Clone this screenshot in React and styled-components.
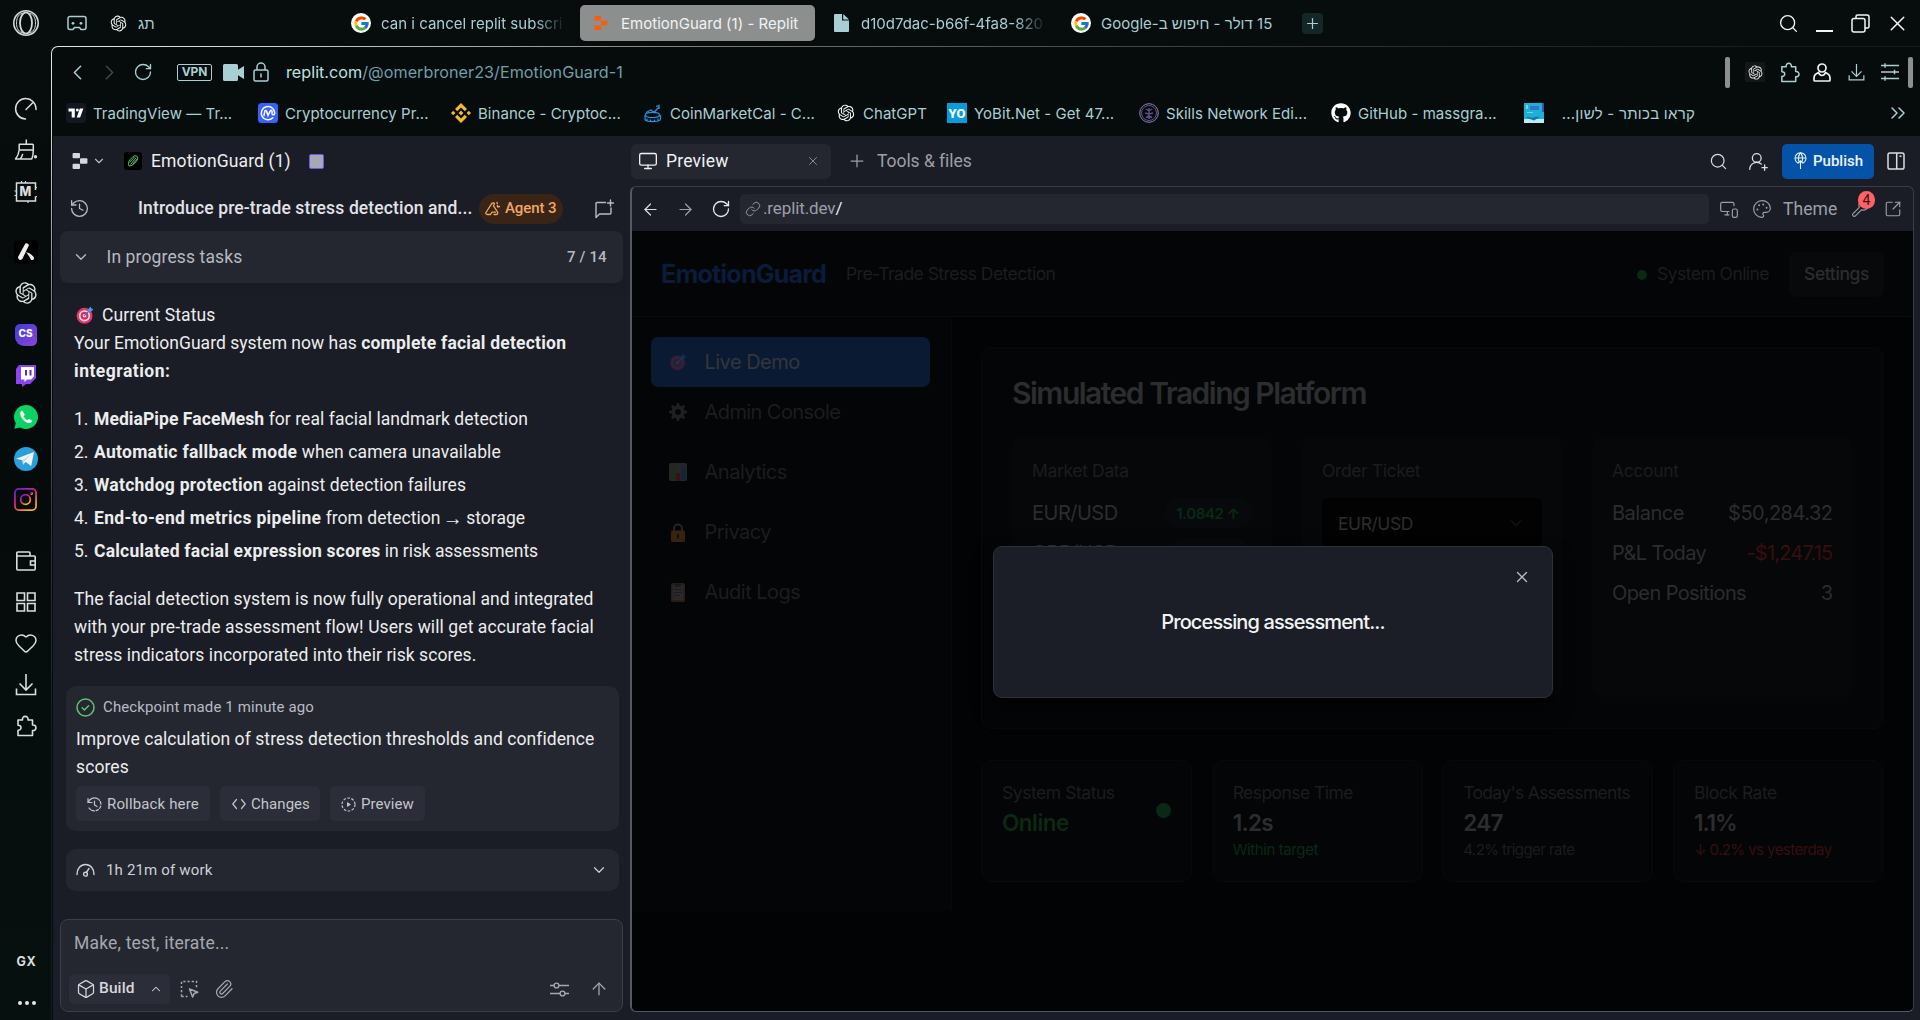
import React from "react";
import styled, { createGlobalStyle, css } from "styled-components";
import {
  Search, X, ChevronLeft, ChevronRight, ChevronDown, ChevronUp, RotateCw, Plus,
  Monitor, ArrowLeft, ArrowRight, ArrowUp, Link as LinkIcon, MonitorSmartphone, Palette, Wrench,
  SquareArrowOutUpRight, UserRoundPlus, History, Paperclip, Box, Heart, ChevronsRight,
} from "lucide-react";
import { RiOpenaiFill } from "react-icons/ri";
import { FcGoogle } from "react-icons/fc";
import { FaGithub } from "react-icons/fa";

const ui = '"Inter", "Liberation Sans", sans-serif';
const plex = '"Roboto", "Liberation Sans", sans-serif';

const Global = createGlobalStyle`
  *, *::before, *::after { box-sizing: border-box; }
  html, body, #root { height: 100%; }
  body { margin: 0; background: #060b0b; overflow: hidden; font-family: ${ui}; }
  svg { display: block; flex: none; }
`;

const Browser = styled.div`
  display: flex;
  width: 1920px;
  height: 1020px;
  background: linear-gradient(180deg, #070c0c, #050a0a 40%, #06100f);
`;

const Text = styled.span`
  flex: none;
  display: block;
  white-space: nowrap;
  width: ${(p) => (p.$w ? `${p.$w}px` : "auto")};
  margin-left: ${(p) => p.$ml || 0}px;
  font-size: ${(p) => p.$size || 15}px;
  font-weight: ${(p) => p.$weight || 400};
  letter-spacing: ${(p) => p.$ls || 0}px;
  color: ${(p) => p.$color || "inherit"};
  text-align: ${(p) => p.$align || "left"};
  line-height: ${(p) => p.$lh || "1.4"};
  ${(p) =>
    p.$fade &&
    css`
      mask-image: linear-gradient(90deg, #000 84%, rgba(0, 0, 0, 0.1));
    `}
`;

const Icon = styled.span`
  flex: none;
  display: flex;
  align-items: center;
  justify-content: center;
  width: ${(p) => p.$w || 20}px;
  height: ${(p) => p.$h || p.$w || 20}px;
  margin-left: ${(p) => p.$ml || 0}px;
  color: ${(p) => p.$color || "inherit"};
  background: ${(p) => p.$bg || "none"};
`;

/* ---------- browser side rail ---------- */

const Rail = styled.nav`
  flex: none;
  width: 51px;
  display: flex;
  flex-direction: column;
  color: #d9dede;
`;
const RailLogo = styled.div`
  height: 46px;
  display: flex;
  align-items: center;
  justify-content: center;
`;
const RailGroup = styled.div`
  display: flex;
  flex-direction: column;
  margin-top: ${(p) => p.$mt}px;
`;
const RailItem = styled.div`
  height: 41.3px;
  display: flex;
  align-items: center;
  justify-content: center;
`;
const RailFoot = styled.div`
  margin-top: auto;
  height: 80px;
  display: flex;
  flex-direction: column;
  align-items: center;
  gap: 30px;
  padding: 13px 0 0 2px;
`;
const Tile = styled.span`
  display: flex;
  align-items: center;
  justify-content: center;
  width: 24px;
  height: 24px;
  border-radius: 4px;
  background: #000;
`;

const OperaLogo = () => (
  <svg width="28" height="28" viewBox="0 0 28 28" fill="none" stroke="#d4d7d7">
    <circle cx="14" cy="14" r="12.2" strokeWidth="1.6" />
    <ellipse cx="14" cy="14" rx="6" ry="10.6" strokeWidth="1.8" />
    <path d="M10.500 3.800C5.500 6 4.500 10 4.500 14s1 8 6 10.200M17.500 3.800c5 2.200 6 6.200 6 10.200s-1 8-6 10.200" strokeWidth="1" />
  </svg>
);
const Speed = () => (
  <svg width="24" height="24" viewBox="0 0 24 24" fill="none" stroke="currentColor" strokeWidth="1.500" strokeLinecap="round">
    <path d="M11.500 22A10.200 10.200 0 1 1 22 11.500V12.500" />
    <path d="M12 12.500 18.500 6" />
  </svg>
);
const Broom = () => (
  <svg width="24" height="24" viewBox="0 0 24 24" fill="none" stroke="currentColor" strokeWidth="1.500" strokeLinejoin="round">
    <path d="M12.300 1.500v4.800M5.200 6.300h13.300a.8.8 0 0 1 .8.8V12H5.200zM5.200 12C4.800 15.500 3.500 18.500 1.500 21h16.300c1.200-2.500 1.500-6 1.500-9M6.500 20.500c1.200-1.300 1.800-3 2.200-4.700" />
    <circle cx="21.500" cy="18.800" r="1.700" fill="currentColor" stroke="none" />
  </svg>
);
const MemoryChip = () => (
  <svg width="24" height="24" viewBox="0 0 24 24" fill="none" stroke="currentColor" strokeWidth="1.500">
    <path d="M21.500 10V3h-19v18h19v-4.500" />
    <path d="M7.500 1v2M11.500 1v2M.5 11h2M.5 15.500h2M21.500 7.500H23M21.500 16.500H23M14 21v2" strokeWidth="1.200" />
  </svg>
);
const ChipBox = styled.span`
  display: grid;
  place-items: center;
  > * { grid-area: 1 / 1; }
`;
const Avast = () => (
  <svg width="18" height="18" viewBox="0 0 18 18" fill="#eceeee">
    <path d="M1 14 7.800 1.600a2 2 0 0 1 3.800 1.500L5.400 15.800a2.200 2.200 0 0 1-4-.3A2 2 0 0 1 1 14z" />
    <path d="M9 9.300c3.500.6 6.700 2.800 7.900 5.300a1.800 1.800 0 0 1-3.200 1.600C12.600 13.800 11 11.500 9 9.300z" />
  </svg>
);
const CsTile = styled.span`
  display: flex;
  align-items: center;
  justify-content: center;
  width: 22px;
  height: 22px;
  border-radius: 5px 5px 5px 9px;
  background: linear-gradient(135deg, #4b3fd8 20%, #8d44d8);
  color: #fff;
  font: 800 10px/1 ${ui};
  padding-bottom: 3px;
`;
const Twitch = () => (
  <svg width="21" height="22" viewBox="0 0 21 22">
    <path d="M4 0h17v13l-6 6h-4l-4 3v-3H1V4z" fill="#8e43f0" />
    <path d="M6 2h13v9.500L16 14.500h-4l-2.500 2.500v-2.500H6z" fill="#fff" />
    <path d="M10 5h2v5.500h-2zM14.500 5h2v5.500h-2z" fill="#5b2fa8" />
  </svg>
);
const Whats = () => (
  <svg width="24" height="24" viewBox="0 0 24 24">
    <path d="M12 0a12 12 0 1 1-6 22.400L.3 23.800l1.500-5.500A12 12 0 0 1 12 0z" fill="#0bd262" />
    <path d="M8.500 5.800c-1.500 0-2.600 1.400-2.300 3.300.7 4 4.200 7.900 8.200 8.900 1.900.4 3.600-.7 3.800-2.300l-3.200-2-1.700 1.500c-1.600-.8-2.900-2.200-3.700-3.900l1.300-1.500z" fill="#f4f4f4" />
  </svg>
);
const Telegram = () => (
  <svg width="24" height="24" viewBox="0 0 24 24">
    <circle cx="12" cy="12" r="12" fill="#2a9fda" />
    <path d="M2 11.700 20 5l-2.800 14-5.500-4-2.700 2.700-.6-4.500z" fill="#f0f4f6" />
    <path d="m8.500 13.300 8-5.500-6 6.500-1.400 3.500z" fill="#c3dbe8" />
  </svg>
);
const Insta = () => (
  <svg width="23" height="23" viewBox="0 0 24 24" fill="none" stroke="url(#ig)" strokeWidth="1.800">
    <defs>
      <linearGradient id="ig" x1="0" y1="0" x2="0.700" y2="1">
        <stop offset="0" stopColor="#6a20d0" />
        <stop offset="0.500" stopColor="#e0208c" />
        <stop offset="1" stopColor="#f9b21a" />
      </linearGradient>
    </defs>
    <rect x="1" y="1" width="22" height="22" rx="4" />
    <circle cx="12" cy="12" r="5" />
    <circle cx="18.300" cy="5.700" r="0.600" />
  </svg>
);
const Wallet = () => (
  <svg width="22" height="22" viewBox="0 0 22 22" fill="none" stroke="currentColor" strokeWidth="1.600">
    <path d="M1.800 6V19a1 1 0 0 0 1 1h16.400a1 1 0 0 0 1-1V7a1 1 0 0 0-1-1zM1.800 6V3a1 1 0 0 1 1-1H14a1 1 0 0 1 1 1v3" />
    <path d="M20.500 11h-5v4h5" />
  </svg>
);
const Grid4 = () => (
  <svg width="22" height="22" viewBox="0 0 22 22" fill="none" stroke="currentColor" strokeWidth="1.600">
    <path d="M2 2h7.500v7.500H2zM12.500 2H20v7.500h-7.500zM2 12.500h7.500V20H2zM12.500 12.500H20V20h-7.500z" />
  </svg>
);
const DownloadTray = ({ s = 22 }) => (
  <svg width={s} height={s} viewBox="0 0 22 22" fill="none" stroke="currentColor" strokeWidth="1.600">
    <path d="M1.500 14.500V20.500h19v-6M11 0v15.500M4.500 9.500 11 16l6.500-6.500" />
  </svg>
);
const OperaPuzzle = ({ s = 22 }) => (
  <svg width={s} height={s} viewBox="0 0 22 22" fill="none" stroke="currentColor" strokeWidth="1.600" strokeLinejoin="round">
    <path d="M3 5h4.500c-.8-4.800 6.300-4.800 5.500 0H17.500v5c4.600-.6 4.600 6.100 0 5.500V20.500H3v-5.300c4 .2 4-5.200 0-5z" />
  </svg>
);
const Dots = styled.span`
  display: flex;
  gap: 3px;
  &::before, &::after, i { content: ""; width: 4px; height: 4px; border-radius: 50%; background: #e6e8e8; }
`;

function SideRail() {
  return (
    <Rail>
      <RailLogo><OperaLogo /></RailLogo>
      <RailGroup $mt={42.500}>
        <RailItem><Speed /></RailItem>
        <RailItem><Broom /></RailItem>
        <RailItem><ChipBox><MemoryChip /><Text $size={12.500} $weight={800} $lh="14px">M</Text></ChipBox></RailItem>
      </RailGroup>
      <RailGroup $mt={19}>
        <RailItem><Tile><Avast /></Tile></RailItem>
        <RailItem><RiOpenaiFill size={26} /></RailItem>
        <RailItem><CsTile>CS</CsTile></RailItem>
        <RailItem><Twitch /></RailItem>
        <RailItem><Whats /></RailItem>
        <RailItem><Telegram /></RailItem>
        <RailItem><Insta /></RailItem>
      </RailGroup>
      <RailGroup $mt={19.500}>
        <RailItem><Wallet /></RailItem>
        <RailItem><Grid4 /></RailItem>
        <RailItem><Heart size={24} strokeWidth={1.500} /></RailItem>
        <RailItem><DownloadTray /></RailItem>
        <RailItem><OperaPuzzle /></RailItem>
      </RailGroup>
      <RailFoot>
        <Text $size={12.500} $weight={700} $lh="18px" $ls={0.700}>GX</Text>
        <Dots><i /></Dots>
      </RailFoot>
    </Rail>
  );
}

/* ---------- browser chrome ---------- */

const Main = styled.div`
  flex: 1;
  min-width: 0;
  display: flex;
  flex-direction: column;
`;
const TabStrip = styled.div`
  height: 46px;
  flex: none;
  display: flex;
  align-items: center;
  color: #a9cfd4;
`;
const ActiveTab = styled.div`
  display: flex;
  align-items: center;
  width: 235px;
  height: 36px;
  margin-left: 17px;
  padding-left: 14px;
  border-radius: 5px;
  background: #8d8f8e;
  color: #eef3f3;
`;
const Spacer = styled.span`
  flex: 1;
`;
const Edge = styled.div`
  flex: 1;
  min-height: 0;
  display: flex;
  padding: 1px 0 0 1px;
  border-radius: 7px 0 0 0;
  background: radial-gradient(ellipse 1750px 700px at 0 0, #e4e6e6 0, #d0d2d2 12%, #6c6e6e 42%, #303434 70%, #161b1b 100%);
`;
const Window = styled.div`
  flex: 1;
  min-width: 0;
  display: flex;
  flex-direction: column;
  padding-left: 1px;
  border-radius: 6px 0 0 0;
  background: #060b0b;
`;
const Row = styled.div`
  flex: none;
  display: flex;
  align-items: center;
  height: ${(p) => p.$h}px;
  padding-left: ${(p) => p.$pl || 0}px;
  padding-bottom: ${(p) => p.$pb || 0}px;
  color: ${(p) => p.$color || "#a9cfd4"};
`;
const Vpn = styled.span`
  display: flex;
  align-items: center;
  justify-content: center;
  width: 35px;
  height: 17px;
  margin-left: 24px;
  border: 1.500px solid #a9cfd4;
  border-radius: 2px;
  font: 700 12px/1 ${ui};
  letter-spacing: -0.2px;
`;
const Grip = styled.span`
  width: 5px;
  height: 31px;
  border-radius: 2px;
  background: #8d8f8f;
  margin-left: ${(p) => p.$ml || 0}px;
`;
const Mark = styled.div`
  flex: none;
  display: flex;
  align-items: center;
  gap: 7px;
  width: ${(p) => p.$w}px;
`;
const PlusTab = styled.span`
  display: flex;
  align-items: center;
  justify-content: center;
  width: 21px;
  height: 21px;
  margin-left: 28px;
  border-radius: 4px;
  background: #152629;
`;
const Google = styled.span`
  flex: none;
  display: flex;
  align-items: center;
  justify-content: center;
  width: 20px;
  height: 20px;
  border-radius: 50%;
  background: #fff;
  margin-left: ${(p) => p.$ml}px;
`;

const Bot = () => (
  <svg width="20" height="17" viewBox="0 0 20 17" fill="none" stroke="currentColor" strokeWidth="1.500">
    <path d="M3 1.500h14a2 2 0 0 1 2 2v9a2 2 0 0 1-2 2h-3l-1.500-2h-5l-1.500 2H3a2 2 0 0 1-2-2v-9a2 2 0 0 1 2-2z" />
    <circle cx="6" cy="8.300" r="1.400" fill="currentColor" stroke="none" />
    <circle cx="14" cy="8.300" r="1.400" fill="currentColor" stroke="none" />
  </svg>
);
const Replit = ({ s = 14, c = "#ff5a0a" }) => (
  <svg width={s} height={s} viewBox="0 0 14 14" fill={c}>
    <rect x="0.500" y="0" width="6.500" height="4.600" rx="0.800" />
    <rect x="7" y="4.700" width="6.500" height="4.600" rx="0.800" />
    <rect x="0.500" y="9.400" width="6.500" height="4.600" rx="0.800" />
  </svg>
);
const FileIcon = () => (
  <svg width="15" height="18" viewBox="0 0 15 18" fill="#a9cfd4">
    <path d="M0 1a1 1 0 0 1 1-1h7v6.500h7V17a1 1 0 0 1-1 1H1a1 1 0 0 1-1-1zM9.200 0 15 5.500H9.200z" />
  </svg>
);
const Restore = () => (
  <svg width="19" height="19" viewBox="0 0 19 19" fill="none" stroke="currentColor" strokeWidth="1.500">
    <rect x="1" y="4.500" width="13" height="13.500" rx="2" />
    <path d="M5 4.500V2.500A1.500 1.500 0 0 1 6.500 1H16a2 2 0 0 1 2 2v9.500a1.500 1.500 0 0 1-1.500 1.500H14" />
  </svg>
);
const Camera = () => (
  <svg width="21" height="17" viewBox="0 0 21 17" fill="#a9cfd4">
    <path d="M1.500 0h12A1.500 1.500 0 0 1 15 1.500v4.300L21 2v13l-6-3.800v4.300a1.500 1.500 0 0 1-1.500 1.500h-12A1.500 1.500 0 0 1 0 15.500v-14A1.500 1.500 0 0 1 1.500 0z" />
  </svg>
);
const Padlock = () => (
  <svg width="16" height="20" viewBox="0 0 16 20" fill="none" stroke="currentColor" strokeWidth="1.500">
    <rect x="1" y="8" width="14" height="11" rx="1.500" />
    <path d="M4 8V5a4 4 0 0 1 8 0v3M8 11.500v4" />
  </svg>
);
const Person = () => (
  <svg width="18" height="19" viewBox="0 0 18 19" fill="none" stroke="#eef3f3" strokeWidth="1.700">
    <circle cx="9" cy="5" r="4" />
    <path d="M5.500 9.500C3 10.500 1 12.500 1 15v2a1 1 0 0 0 1 1h14a1 1 0 0 0 1-1v-2c0-2.500-2-4.500-4.500-5.500C11 13.500 7 13.500 5.500 9.500z" />
  </svg>
);
const Tuner = () => (
  <svg width="18" height="18" viewBox="0 0 18 18" fill="none" stroke="currentColor" strokeWidth="1.400">
    <path d="M0 2.500h18M0 9h18M0 15.500h18M4 .3v4.400M13.500 6.800v4.400M4 13.300v4.400" />
  </svg>
);
const TvIcon = () => (
  <svg width="20" height="20" viewBox="0 0 20 20">
    <rect width="20" height="20" rx="3" fill="#131722" />
    <path d="M2.500 5.500h6.300v9H5.700v-6H2.500zM13.800 5.500h3.600l-3.300 9h-3.400z" fill="#fff" />
    <circle cx="11.300" cy="7" r="1.500" fill="#fff" />
  </svg>
);
const CmcIcon = () => (
  <svg width="20" height="20" viewBox="0 0 20 20" fill="none" stroke="#fff" strokeWidth="1.500" strokeLinecap="round">
    <rect width="20" height="20" rx="3.500" fill="#3861fb" stroke="none" />
    <path d="M14.800 14.800A6.700 6.700 0 1 1 16.700 10c0 2.400-2.700 2.400-2.700.3V8.500c0-1.600-1.400-1.600-1.900-.4L10 12.500 8.600 8.200c-.4-1.200-1.600-.9-1.800.2L6 12.500" />
  </svg>
);
const BinanceIcon = () => (
  <svg width="20" height="20" viewBox="0 0 20 20" fill="#f3ba2f">
    <path d="m10 0 6 6-2.200 2.200L10 4.400 6.200 8.200 4 6zM10 20l6-6-2.200-2.200L10 15.600l-3.800-3.800L4 14zM2.200 7.800 4.400 10l-2.200 2.200L0 10zM17.800 7.800 20 10l-2.200 2.200L15.600 10zM10 7.600l2.400 2.400-2.400 2.400L7.600 10z" />
  </svg>
);
const CalIcon = () => (
  <svg width="20" height="19" viewBox="0 0 20 19" fill="none" stroke="#2a8fd8" strokeWidth="1.300">
    <ellipse cx="9.500" cy="11" rx="7" ry="2.600" />
    <path d="M2 11v4c0 3.500 15.500 3.500 15.500 0v-4M4 17v-2.500M7.500 18v-2.500M11.500 18v-2.500M15 17v-2.500M3 8.500l5-2.500 3 2.500 4.500-5M13 2.500l3-1v3.500" />
  </svg>
);
const YoTile = styled.span`
  display: flex;
  align-items: center;
  justify-content: center;
  width: 20px;
  height: 20px;
  background: #0a9bdc;
  color: #fff;
  font: 800 13px/1 "Roboto", sans-serif;
`;
const SkillsIcon = () => (
  <svg width="20" height="20" viewBox="0 0 20 20" fill="none" stroke="#7a5fc0" strokeWidth="1">
    <circle cx="10" cy="10" r="9.300" stroke="#8f86b8" />
    <circle cx="10" cy="10" r="7.500" strokeWidth="0.800" />
    <path d="M10 5v11M10 8 7 6M10 8l3-2M10 11 6 10M10 11l4-1M10 13l-3 1.500M10 13l3 1.500" stroke="#58507c" strokeWidth="1.500" />
  </svg>
);
const BookIcon = () => (
  <svg width="20" height="20" viewBox="0 0 20 20">
    <rect width="20" height="20" fill="#1fb0d8" />
    <rect x="18" width="2" height="9" fill="#3c52b0" />
    <path d="M6 3h9v4H6z" fill="#2c78c6" />
    <path d="M0 16h20v4H0z" fill="#bfeaf4" />
    <path d="M2 14.500c3-2 4 1 7 0s4-1 7-.5l-6 3.500z" fill="#1577ae" />
    <path d="M2 2h2v4H2zM3 9h6v1H3z" fill="#6fd4ea" />
  </svg>
);

function Tabs() {
  return (
    <TabStrip>
      <Icon $w={20} $ml={16}><Bot /></Icon>
      <Icon $w={18} $ml={22} $color="#eef3f3"><RiOpenaiFill size={19} /></Icon>
      <Text $ml={11} $w={213} $size={15}>תג</Text>
      <Google $ml={0}><FcGoogle size={17} /></Google>
      <Text $ml={10} $w={182} $fade $ls={0.020}>can i cancel replit subscri</Text>
      <ActiveTab>
        <Replit />
        <Text $ml={13} $size={15} $ls={0.020}>EmotionGuard (1) - Replit</Text>
      </ActiveTab>
      <Icon $w={15} $ml={19}><FileIcon /></Icon>
      <Text $ml={12} $w={183} $fade>d10d7dac-b66f-4fa8-820</Text>
      <Google $ml={27}><FcGoogle size={17} /></Google>
      <Text $ml={10} $w={173} dir="rtl">15 דולר - חיפוש ב-Google</Text>
      <PlusTab><Plus size={17} strokeWidth={1.700} /></PlusTab>
      <Spacer />
      <Row $h={40} $color="#f2f5f5">
        <Icon $w={22}><Search size={21} strokeWidth={1.500} /></Icon>
        <Icon $w={18} $ml={16}><svg width="17" height="19" viewBox="0 0 17 19" fill="#f2f5f5"><path d="M0 16h17v2H0z" /></svg></Icon>
        <Icon $w={19} $ml={18}><Restore /></Icon>
        <Icon $w={22} $ml={16}><X size={25} strokeWidth={1.400} /></Icon>
        <Icon $w={12} />
      </Row>
    </TabStrip>
  );
}

function AddressRow() {
  return (
    <Row $h={50}>
      <Icon $w={22} $ml={13}><ChevronLeft size={25} strokeWidth={1.500} /></Icon>
      <Icon $w={22} $ml={10} $color="#3d4a4c"><ChevronRight size={25} strokeWidth={1.500} /></Icon>
      <Icon $w={20} $ml={13}><RotateCw size={20} strokeWidth={1.600} /></Icon>
      <Vpn>VPN</Vpn>
      <Icon $w={21} $ml={11}><Camera /></Icon>
      <Icon $w={16} $ml={9}><Padlock /></Icon>
      <Text $ml={17} $size={16.200} $color="#bfe0e4" $ls={0.010}>replit.com</Text>
      <Text $size={16.200} $color="#6d9fa8" $ls={0.020}>/@omerbroner23/EmotionGuard-1</Text>
      <Spacer />
      <Grip />
      <Icon $w={20} $ml={15} $bg="#141717" $color="#dfe3e3"><RiOpenaiFill size={17} /></Icon>
      <Icon $w={20} $ml={14}><OperaPuzzle s={21} /></Icon>
      <Icon $w={20} $ml={13}><Person /></Icon>
      <Icon $w={20} $ml={14}><DownloadTray s={17} /></Icon>
      <Icon $w={20} $ml={14}><Tuner /></Icon>
      <Grip $ml={8} />
      <Icon $w={7} />
    </Row>
  );
}

const marks = [
  [<TvIcon />, "TradingView — Tr...", 192],
  [<CmcIcon />, "Cryptocurrency Pr...", 193],
  [<BinanceIcon />, "Binance - Cryptoc...", 192],
  [<CalIcon />, "CoinMarketCal - C...", 193],
  [<RiOpenaiFill size={20} color="#eef3f3" />, "ChatGPT", 111],
  [<YoTile>YO</YoTile>, "YoBit.Net - Get 47...", 192],
  [<SkillsIcon />, "Skills Network Edi...", 192],
  [<FaGithub size={20} color="#fff" />, "GitHub - massgra...", 193],
];

function Bookmarks() {
  return (
    <Row $h={39} $pl={13} $pb={7}>
      {marks.map(([icon, label, w]) => (
        <Mark key={label} $w={w}>{icon}<Text $ls={0.040}>{label}</Text></Mark>
      ))}
      <Mark $w={172}><BookIcon /><Text $w={144} dir="rtl" $align="right" $ls={0.250}>קראו בכותר - לשון...</Text></Mark>
      <Spacer />
      <ChevronsRight size={24} strokeWidth={1.500} />
      <Icon $w={10} />
    </Row>
  );
}

/* ---------- workspace: chat ---------- */

const Workspace = styled.div`
  flex: 1;
  min-height: 0;
  display: flex;
  background: #1b1d26;
  color: #e8e9ed;
  font-family: ${plex};
`;
const ChatPane = styled.section`
  flex: none;
  width: 577px;
  display: flex;
  flex-direction: column;
`;
const AgentPill = styled.span`
  display: flex;
  align-items: center;
  gap: 4px;
  width: 84px;
  height: 30px;
  margin-left: 7px;
  padding-left: 6px;
  border-radius: 15px;
  background: #3a2416;
  color: #f0a765;
`;
const TasksCard = styled.div`
  display: flex;
  align-items: center;
  width: 563px;
  height: 52px;
  margin-left: 7px;
  padding-left: 10px;
  border-radius: 8px;
  background: #242730;
  color: #b7b9c1;
  box-shadow: 0 6px 12px rgba(0, 0, 0, 0.08);
`;
const Message = styled.article`
  padding: 18px 0 0 21px;
`;
const Line = styled.div`
  display: flex;
  align-items: center;
  height: 28px;
  white-space: pre;
  font-size: 17.500px;
  line-height: 28px;
  color: #eceded;
  letter-spacing: ${(p) => p.$ls || 0}px;
  b { font-weight: 700; letter-spacing: ${(p) => p.$bls ?? p.$ls ?? 0}px; }
`;
const Arrow = styled.span`
  margin: 0 -1px 0 -2px;
  font-family: "Liberation Sans", sans-serif;
  font-size: 20px;
  line-height: 28px;
`;
const Steps = styled.div`
  display: flex;
  flex-direction: column;
  gap: 5px;
  margin: 20px 0 20px;
`;
const Num = styled.span`
  width: 20px;
  letter-spacing: 0;
`;
const Checkpoint = styled.div`
  width: 553px;
  height: 145px;
  margin: 17px 0 0 13px;
  padding: 10px;
  border-radius: 10px;
  background: #242730;
`;
const CheckpointTitle = styled.div`
  margin-top: 7px;
`;
const Buttons = styled.div`
  display: flex;
  gap: 10px;
  margin-top: 5px;
`;
const Pill = styled.span`
  display: flex;
  align-items: center;
  gap: 5px;
  width: ${(p) => p.$w}px;
  height: 35px;
  padding: 1px 0 0 11px;
  border-radius: 5px;
  background: #2b2d38;
  color: #c3c5cc;
`;
const WorkCard = styled.div`
  display: flex;
  align-items: center;
  width: 553px;
  height: 42px;
  margin: 18px 0 0 13px;
  padding-left: 10px;
  border-radius: 10px;
  background: #242730;
  color: #cfd0d6;
`;
const Composer = styled.div`
  width: 563px;
  height: 93px;
  margin: 28px 0 0 7px;
  padding: 11px 8px 0;
  border: 1px solid #3a3d4a;
  border-radius: 8px;
  background: #242730;
  color: #a6a8b0;
`;
const Tools = styled.div`
  display: flex;
  align-items: center;
  margin-top: 18px;
`;
const BuildBtn = styled.span`
  display: flex;
  align-items: center;
  width: 101px;
  height: 30px;
  padding-left: 7px;
  border-radius: 5px;
  background: #2b2d38;
  color: #d6d7dc;
`;
const Square = styled.span`
  width: 15px;
  height: 15px;
  margin-left: 20px;
  border: 1.500px solid #6b57e8;
  border-radius: 2px;
  background: #a6a9b4;
`;
const Leaf = () => (
  <svg width="18" height="18" viewBox="0 0 18 18">
    <rect width="18" height="18" rx="3" fill="#000" />
    <g fill="none" stroke="#5fc06c" strokeWidth="1">
      <path d="M5.200 14C3.200 11 5 7.500 10.500 3.700c3.500-.5 4 2.500 2 5.300-2 2.700-4.500 5-7.300 5z" />
      <path d="M6.500 12.500 12.300 5.500M5.500 10.500l5.500-6M8.500 12.500l4.600-5.500" />
    </g>
  </svg>
);
const AgentMark = () => (
  <svg width="16" height="16" viewBox="0 0 16 16" fill="none" stroke="currentColor" strokeWidth="1.300" strokeLinecap="round" strokeLinejoin="round">
    <path d="M1 11.500 6.500 2.800c.8-1.200 2.400-1.300 3-.3l-1 2.300M1 11.500c-.6 1.200.2 2 1.500 2h3l1.500-2.300h3.500M8.500 4.800l4 6.200c.5 1.500 0 2.500-1.500 2.500H9" />
    <path d="M12 1.500l.3 1.200M14.500 5.500l-1.500.3M12.300 4.500l.4 1.500" />
  </svg>
);
const MessagePlus = () => (
  <svg width="19" height="20" viewBox="0 0 19 20" fill="none" stroke="currentColor" strokeWidth="1.400" strokeLinecap="round" strokeLinejoin="round">
    <path d="M10.500 3.500H2a1 1 0 0 0-1 1V18.500l3.500-3.500H15a1 1 0 0 0 1-1V9M15.500 1v6M12.500 4h6" />
  </svg>
);
const TargetEmoji = ({ s = 18, dim }) => (
  <svg width={s} height={s} viewBox="0 0 18 18" opacity={dim ? 0.28 : 1}>
    <circle cx="8.500" cy="9.800" r={dim ? 7.400 : 8} fill={dim ? "#b0243a" : "#e8336a"} />
    <circle cx="8.500" cy="9.800" r="5.600" fill={dim ? "#6a4a58" : "#f3e8ee"} />
    <circle cx="8.500" cy="9.800" r="4" fill={dim ? "#901c30" : "#d92c5e"} />
    <circle cx="8.500" cy="9.800" r="1.800" fill={dim ? "#8a7078" : "#f3e8ee"} />
    <path d="m8 10 5.500-5.500" stroke="#2e7fc4" strokeWidth="1.200" />
    <path d="M12 5.500 12.300 3l2.500-2.500.5 2 2.200.7L15 5.800z" fill="#3aa5ec" opacity={dim ? 0.5 : 1} />
  </svg>
);
const CheckRing = () => (
  <svg width="19" height="19" viewBox="0 0 19 19" fill="none" stroke="#62c073" strokeWidth="1.500" strokeLinecap="round" strokeLinejoin="round">
    <circle cx="9.500" cy="9.500" r="8.500" />
    <path d="m6.200 9.800 2.200 2.200 4.200-4.300" />
  </svg>
);
const RollbackIcon = () => (
  <svg width="15" height="15" viewBox="0 0 15 15" fill="none" stroke="currentColor" strokeWidth="1.200" strokeLinecap="round">
    <path d="M1.200 5.500A6.500 6.500 0 1 1 2 11" strokeDasharray="14 1.500 2.500 1.800 2.500 1.800 2.500 1.800" />
    <path d="M1 1.500v4h4M7.500 4v4l2.500 1.500" />
  </svg>
);
const CodeIcon = () => (
  <svg width="14" height="12" viewBox="0 0 14 12" fill="none" stroke="currentColor" strokeWidth="1.200" strokeLinecap="round" strokeLinejoin="round">
    <path d="M4.500 1.500.8 6l3.700 4.500M9.500 1.500 13.200 6l-3.700 4.500" />
  </svg>
);
const PlayDashed = () => (
  <svg width="15" height="15" viewBox="0 0 15 15" fill="none" stroke="currentColor">
    <circle cx="7.500" cy="7.500" r="6.500" strokeWidth="1.200" strokeDasharray="2.600 1.500" />
    <path d="m6 5 4 2.500L6 10z" fill="currentColor" stroke="none" />
  </svg>
);
const Gauge = () => (
  <svg width="19" height="14" viewBox="0 0 19 14" fill="none" stroke="currentColor" strokeWidth="1.400" strokeLinecap="round">
    <path d="M1 11.500C1 5.500 4.500 1.500 9.500 1.500S18 5.500 18 11.500M10.300 9.500 13 5.500" />
    <circle cx="9.500" cy="11.200" r="1.900" />
  </svg>
);
const SelectArea = () => (
  <svg width="19" height="18" viewBox="0 0 19 18" fill="none" stroke="currentColor" strokeWidth="1.500">
    <path d="M1.500 16.500v-15h15v6M1.500 16.500h6" strokeDasharray="2.200 2" />
    <path d="m9.500 9 8.300 3.200-3.700 1.300-1.500 3.500z" strokeLinejoin="round" />
  </svg>
);
const Sliders = () => (
  <svg width="19" height="15" viewBox="0 0 19 15" fill="none" stroke="currentColor" strokeWidth="1.400">
    <path d="M0 3.500h4M9 3.500h10M0 11.500h10M15 11.500h4" />
    <circle cx="6.500" cy="3.500" r="2.400" />
    <circle cx="12.500" cy="11.500" r="2.400" />
  </svg>
);

function Chat() {
  return (
    <ChatPane>
      <Row $h={50} $pl={19} $color="#eceded">
        <Replit s={16} c="#d6d7de" />
        <Icon $w={14} $ml={4} $color="#b9bbc4"><ChevronDown size={14} strokeWidth={2} /></Icon>
        <Icon $w={18} $ml={18}><Leaf /></Icon>
        <Text $ml={9} $w={138} $size={17.500} $ls={0.120}>EmotionGuard (1)</Text>
        <Square />
      </Row>
      <Row $h={45} $pl={16} $color="#e2e3e6">
        <Icon $w={20} $color="#b9bbc4"><History size={21} strokeWidth={1.500} /></Icon>
        <Text $ml={49} $w={334} $size={17.500} $weight={500} $ls={0.130}>Introduce pre-trade stress detection and...</Text>
        <AgentPill><AgentMark /><Text $size={15} $weight={500} $ls={-0.080}>Agent 3</Text></AgentPill>
        <Icon $w={20} $ml={31} $color="#b9bbc4"><MessagePlus /></Icon>
      </Row>
      <TasksCard>
        <Icon $w={22}><ChevronDown size={18} strokeWidth={1.800} /></Icon>
        <Text $ml={14.500} $w={460.500} $size={17.500} $weight={400} $ls={0.120}>In progress tasks</Text>
        <Text $size={15} $weight={500} $ls={0.150}>7 / 14</Text>
      </TasksCard>
      <Message>
        <Line $ls={0.100}><Icon $w={20} $ml={1}><TargetEmoji /></Icon><Text $ml={7} $size={17.500} $ls={0.120} $lh="28px">Current Status</Text></Line>
        <Line $ls={0.020} $bls={0.220}>Your EmotionGuard system now has <b>complete facial detection</b></Line>
        <Line $bls={0.500}><b>integration:</b></Line>
        <Steps>
          <Line $ls={0.070}><Num>1.</Num><b>MediaPipe FaceMesh</b> for real facial landmark detection</Line>
          <Line $ls={0.100} $bls={0.280}><Num>2.</Num><b>Automatic fallback mode</b> when camera unavailable</Line>
          <Line $ls={0.060} $bls={0.270}><Num>3.</Num><b>Watchdog protection</b> against detection failures</Line>
          <Line $ls={0.020} $bls={0.320}><Num>4.</Num><b>End-to-end metrics pipeline</b> from detection <Arrow>→</Arrow> storage</Line>
          <Line $ls={-0.080} $bls={0.220}><Num>5.</Num><b>Calculated facial expression scores</b> in risk assessments</Line>
        </Steps>
        <Line $ls={0.070}>The facial detection system is now fully operational and integrated</Line>
        <Line $ls={0.090}>with your pre-trade assessment flow! Users will get accurate facial</Line>
        <Line $ls={0.060}>stress indicators incorporated into their risk scores.</Line>
      </Message>
      <Checkpoint>
        <Row $h={22} $color="#b9bbc4"><Icon $w={19}><CheckRing /></Icon><Text $ml={8} $size={15} $ls={0.120}>Checkpoint made 1 minute ago</Text></Row>
        <CheckpointTitle>
          <Line $ls={0.080}>Improve calculation of stress detection thresholds and confidence</Line>
          <Line $ls={0.100}>scores</Line>
        </CheckpointTitle>
        <Buttons>
          <Pill $w={134}><RollbackIcon /><Text $size={15} $ls={0.150}>Rollback here</Text></Pill>
          <Pill $w={100}><Icon $w={15}><CodeIcon /></Icon><Text $size={15} $ls={0.040}>Changes</Text></Pill>
          <Pill $w={95}><PlayDashed /><Text $size={15} $ls={0.050}>Preview</Text></Pill>
        </Buttons>
      </Checkpoint>
      <WorkCard>
        <Gauge />
        <Text $ml={11} $w={484} $size={15} $ls={0.160}>1h 21m of work</Text>
        <ChevronDown size={18} strokeWidth={1.600} />
      </WorkCard>
      <Composer>
        <Text $ml={5} $size={17.500} $ls={0.180} $lh="25px">Make, test, iterate...</Text>
        <Tools>
          <BuildBtn>
            <Box size={20} strokeWidth={1.500} />
            <Text $ml={3} $w={50} $size={15.500} $weight={500} $ls={0.100}>Build</Text>
            <ChevronUp size={14} strokeWidth={1.800} />
          </BuildBtn>
          <Icon $w={20} $ml={9}><SelectArea /></Icon>
          <Icon $w={20} $ml={15}><Paperclip size={20} strokeWidth={1.500} /></Icon>
          <Spacer />
          <Icon $w={20}><Sliders /></Icon>
          <Icon $w={20} $ml={20}><ArrowUp size={20} strokeWidth={1.500} /></Icon>
          <Icon $w={5} />
        </Tools>
      </Composer>
    </ChatPane>
  );
}

/* ---------- workspace: preview pane ---------- */

const PreviewPane = styled.section`
  flex: none;
  width: 1290px;
  display: flex;
  flex-direction: column;
`;
const PaneTab = styled.div`
  display: flex;
  align-items: center;
  width: 200px;
  height: 35px;
  margin-left: 1px;
  padding-left: 7px;
  border-radius: 6px;
  background: #242730;
  color: #f0f1f3;
`;
const Publish = styled.span`
  display: flex;
  align-items: center;
  gap: 6px;
  width: 92px;
  height: 35px;
  margin-left: 13px;
  padding-left: 12px;
  border-radius: 5px;
  background: #0553a9;
  color: #eef3fa;
`;
const PreviewFrame = styled.div`
  width: 1284px;
  height: 826px;
  display: flex;
  flex-direction: column;
  border: 1px solid #3a3d48;
  border-left: 2px solid #555761;
  border-bottom-color: #55575f;
  border-radius: 6px;
  overflow: hidden;
`;
const UrlField = styled.div`
  display: flex;
  align-items: center;
  width: 969px;
  height: 30px;
  margin-left: 9px;
  padding-left: 5px;
  border-radius: 5px;
  background: #242730;
  color: #9c9fa8;
`;
const WrenchWrap = styled.span`
  position: relative;
  width: 20px;
  height: 20px;
  margin-left: 14px;
`;
const Badge = styled.span`
  position: absolute;
  left: 7px;
  top: -8px;
  width: 17px;
  height: 18px;
  border-radius: 9px;
  background: #ff6166;
  color: #3a1216;
  font-size: 14px;
  line-height: 18px;
  text-align: center;
`;
const PublishMark = () => (
  <svg width="13" height="18" viewBox="0 0 13 18" fill="none" stroke="currentColor" strokeWidth="1.100" strokeLinecap="round">
    <path d="M3.500 10.800A5.500 5.500 0 1 1 9.500 10.800M1 6h11M6.500.8C4 3.500 4 8 5.200 10M6.500.8C9 3.500 9 8 7.800 10M6.500 16.500V9M4.300 11l2.200-2.200L8.700 11" />
  </svg>
);
const PanelIcon = () => (
  <svg width="18" height="18" viewBox="0 0 18 18" fill="none" stroke="currentColor" strokeWidth="1.500">
    <rect x="1" y="1" width="16" height="16" rx="1.800" />
    <path d="M9.700 1v16M12.500 4.300h2" />
  </svg>
);

/* ---------- previewed app ---------- */

const ink = "#2c2d2e";
const faint = "#1c1d1e";
const green = "#0a2914";
const red = "#370f10";

const Site = styled.div`
  position: relative;
  flex: 1;
  min-height: 0;
  display: flex;
  flex-direction: column;
  background: #020304;
  color: ${ink};
  font-family: ${ui};
`;
const SiteHeader = styled.header`
  flex: none;
  display: flex;
  align-items: center;
  height: 86px;
  padding: 2px 29px 0 29px;
  border-bottom: 1px solid #090a0c;
  background: #040507;
`;
const Dot = styled.span`
  flex: none;
  width: ${(p) => p.$s}px;
  height: ${(p) => p.$s}px;
  border-radius: 50%;
  background: ${green};
`;
const SettingsBtn = styled.span`
  display: flex;
  align-items: center;
  justify-content: center;
  width: 95px;
  height: 45px;
  margin-left: 20px;
  border-radius: 7px;
  background: #08090b;
`;
const SiteBody = styled.div`
  flex: 1;
  min-height: 0;
  display: flex;
  align-items: flex-start;
`;
const Menu = styled.aside`
  flex: none;
  display: flex;
  flex-direction: column;
  width: 320px;
  height: 594px;
  padding: 20px 0 0 19px;
  border-right: 1px solid #070809;
  background: #040507;
`;
const MenuItem = styled.div`
  flex: none;
  display: flex;
  align-items: center;
  gap: 18px;
  width: 279px;
  height: ${(p) => p.$h}px;
  padding-left: 17.5px;
  border-radius: 7px;
  background: ${(p) => (p.$active ? "#0b1a33" : "none")};
  color: ${(p) => (p.$active ? "#33363b" : faint)};
`;
const Content = styled.main`
  flex: 1;
  min-width: 0;
  display: flex;
  flex-direction: column;
  gap: 31px;
  padding: 30px 29px 0 29px;
`;
const Platform = styled.section`
  height: 382px;
  padding: 25px 30px;
  border: 1px solid #08090b;
  border-radius: 10px;
  background: #040507;
`;
const Columns = styled.div`
  display: grid;
  grid-template-columns: repeat(3, 259.5px);
  column-gap: 30.5px;
  margin-top: 24px;
`;
const Panel = styled.div`
  display: flex;
  flex-direction: column;
  height: 260px;
  padding: 22px 19px 0 20px;
  border-radius: 10px;
  background: #060709;
`;
const PanelTitle = styled.div`
  height: 26px;
  margin-bottom: 13px;
`;
const DataRow = styled.div`
  display: flex;
  align-items: center;
  justify-content: space-between;
  height: 30px;
  margin-bottom: 10px;
  font-size: 20px;
  letter-spacing: -0.5px;
  color: ${ink};
`;
const Quote = styled.span`
  display: flex;
  align-items: center;
  justify-content: center;
  width: ${(p) => p.$w}px;
  height: 30px;
  margin-right: ${(p) => p.$mr || 0}px;
  border-radius: 15px;
  background: #08090c;
  color: ${green};
  font-size: 15px;
  font-weight: 600;
  letter-spacing: -0.4px;
`;
const Select = styled.div`
  display: flex;
  align-items: center;
  justify-content: space-between;
  width: 220px;
  height: 50px;
  padding: 0 16px;
  border-radius: 6px;
  background: #020203;
  font-size: 17.500px;
  letter-spacing: -0.45px;
`;
const Stats = styled.div`
  display: grid;
  grid-template-columns: repeat(4, minmax(0, 1fr));
  column-gap: 19.5px;
`;
const Stat = styled.div`
  display: flex;
  align-items: flex-start;
  justify-content: space-between;
  height: 122px;
  padding: 19px 20px 0;
  border: 1px solid #08090b;
  border-radius: 10px;
  background: #040507;
`;
const StatDot = styled.span`
  padding-top: 23px;
`;
const Dialog = styled.div`
  position: absolute;
  left: 361px;
  top: 315px;
  display: flex;
  align-items: center;
  justify-content: center;
  width: 560px;
  height: 152px;
  border: 1px solid #2d313c;
  border-radius: 9px;
  background: #1b1e26;
  color: #f2f3f4;
  box-shadow: 0 12px 20px rgba(0, 0, 0, 0.6);
`;
const CloseDialog = styled.span`
  position: absolute;
  right: 21px;
  top: 21px;
  color: #bcbec2;
`;

const GearEmoji = () => (
  <svg width="18" height="18" viewBox="0 0 18 18" opacity="0.9">
    <circle cx="9" cy="9" r="4.800" fill="none" stroke="#232326" strokeWidth="3.800" />
    <path d="M9 0v3.500M9 14.500V18M0 9h3.500M14.500 9H18M2.600 2.600l2.600 2.600M12.800 12.800l2.600 2.600M15.400 2.600l-2.600 2.600M5.200 12.800l-2.600 2.600" stroke="#232326" strokeWidth="2.600" />
  </svg>
);
const ChartEmoji = () => (
  <svg width="18" height="18" viewBox="0 0 18 18">
    <rect width="18" height="18" rx="2" fill="#252626" />
    <path d="M2 4.500h3.800V17H2z" fill="#1a2c1c" />
    <path d="M7.200 10H11v8H7.200z" fill="#3a0f1c" />
    <path d="M12.300 2.500H17V17h-4.700z" fill="#132636" />
  </svg>
);
const LockEmoji = () => (
  <svg width="16" height="19" viewBox="0 0 16 19">
    <path d="M4 9V5.500a4 4 0 0 1 8 0V9" fill="none" stroke="#262424" strokeWidth="2" />
    <rect x="1" y="7.500" width="14" height="11.500" rx="1.500" fill="#37230f" />
    <path d="M7 11h2v4.500H7z" fill="#150e0a" />
  </svg>
);
const ClipboardEmoji = () => (
  <svg width="16" height="19" viewBox="0 0 16 19">
    <rect x="1" width="14" height="19" rx="1.500" fill="#2b1c15" />
    <path d="M2.500 2h11v15h-11z" fill="#29282a" />
    <path d="M5 .5h6v3H5zM4 6h8v.8H4zM4 9h8v.8H4zM4 12h6v.8H4z" fill="#18181a" />
  </svg>
);

function Preview() {
  return (
    <PreviewPane>
      <Row $h={50} $color="#9c9fa8">
        <PaneTab>
          <Monitor size={20} strokeWidth={1.600} />
          <Text $ml={8} $w={140} $size={17.500} $ls={0.200}>Preview</Text>
          <Icon $w={14} $color="#8d909a"><X size={14} strokeWidth={1.600} /></Icon>
        </PaneTab>
        <Icon $w={20} $ml={16}><Plus size={20} strokeWidth={1.500} /></Icon>
        <Text $ml={10} $size={17.500} $ls={-0.050}>Tools & files</Text>
        <Spacer />
        <Icon $w={20} $color="#dcdde1"><Search size={19} strokeWidth={1.500} /></Icon>
        <Icon $w={22} $ml={19} $color="#dcdde1"><UserRoundPlus size={21} strokeWidth={1.500} /></Icon>
        <Publish><PublishMark /><Text $size={15} $weight={500}>Publish</Text></Publish>
        <Icon $w={20} $ml={12} $color="#dcdde1"><PanelIcon /></Icon>
        <Icon $w={14} />
      </Row>
      <PreviewFrame>
        <Row $h={44} $pl={8} $color="#9c9fa8">
          <Icon $w={20} $color="#dcdde1"><ArrowLeft size={19} strokeWidth={1.500} /></Icon>
          <Icon $w={20} $ml={15}><ArrowRight size={19} strokeWidth={1.500} /></Icon>
          <Icon $w={20} $ml={16} $color="#e6e7ea"><RotateCw size={20} strokeWidth={1.600} /></Icon>
          <UrlField>
            <LinkIcon size={16} strokeWidth={1.400} />
            <Text $ml={2} $size={17} $ls={-0.120}>.replit.dev</Text>
            <Text $size={17} $color="#eceded">/</Text>
          </UrlField>
          <Icon $w={20} $ml={10}><MonitorSmartphone size={20} strokeWidth={1.400} /></Icon>
          <Icon $w={20} $ml={13}><Palette size={20} strokeWidth={1.400} /></Icon>
          <Text $ml={11} $w={54} $size={17.500} $ls={0.050}>Theme</Text>
          <WrenchWrap><Wrench size={19} strokeWidth={1.400} /><Badge>4</Badge></WrenchWrap>
          <Icon $w={20} $ml={12}><SquareArrowOutUpRight size={18} strokeWidth={1.500} /></Icon>
        </Row>
        <Site>
          <SiteHeader>
            <Text $size={25} $weight={700} $ls={-0.780} $color="#0b1b3a">EmotionGuard</Text>
            <Text $ml={20} $size={17.500} $ls={-0.530} $color={faint}>Pre-Trade Stress Detection</Text>
            <Spacer />
            <Dot $s={10} />
            <Text $ml={10} $size={17.500} $ls={-0.550} $color={faint}>System Online</Text>
            <SettingsBtn><Text $size={17.500} $weight={500} $ls={-0.400}>Settings</Text></SettingsBtn>
          </SiteHeader>
          <SiteBody>
            <Menu>
              <MenuItem $h={50} $active><TargetEmoji dim /><Text $size={20} $ls={-0.530}>Live Demo</Text></MenuItem>
              <MenuItem $h={50}><GearEmoji /><Text $size={20} $ls={-0.580}>Admin Console</Text></MenuItem>
              <MenuItem $h={70}><ChartEmoji /><Text $size={20} $ls={-0.480}>Analytics</Text></MenuItem>
              <MenuItem $h={50}><Icon $w={18}><LockEmoji /></Icon><Text $size={20} $ls={-0.520}>Privacy</Text></MenuItem>
              <MenuItem $h={70}><Icon $w={18}><ClipboardEmoji /></Icon><Text $size={20} $ls={-0.520}>Audit Logs</Text></MenuItem>
            </Menu>
            <Content>
              <Platform>
                <Text $size={30} $weight={600} $ls={-1.500} $lh="40px">Simulated Trading Platform</Text>
                <Columns>
                  <Panel>
                    <PanelTitle><Text $size={17.500} $ls={-0.350} $color={faint}>Market Data</Text></PanelTitle>
                    <DataRow><span>EUR/USD</span><Quote $w={89}>1.0842 ↑</Quote></DataRow>
                    <DataRow><span>GBP/USD</span><Quote $w={80} $mr={3}>1.2731 ↓</Quote></DataRow>
                  </Panel>
                  <Panel>
                    <PanelTitle><Text $size={17.500} $ls={-0.380} $color={faint}>Order Ticket</Text></PanelTitle>
                    <Select>EUR/USD<ChevronDown size={20} strokeWidth={1.200} color="#1f2021" /></Select>
                  </Panel>
                  <Panel>
                    <PanelTitle><Text $size={17.500} $ls={-0.350} $color={faint}>Account</Text></PanelTitle>
                    <DataRow><span>Balance</span><span>$50,284.32</span></DataRow>
                    <DataRow><Text $size={20} $ls={-0.620}>P&L Today</Text><Text $size={20} $ls={-0.780} $color={red}>-$1,247.15</Text></DataRow>
                    <DataRow><Text $size={20} $ls={-0.600}>Open Positions</Text><span>3</span></DataRow>
                  </Panel>
                </Columns>
              </Platform>
              <Stats>
                <Stat>
                  <div>
                    <Text $size={17.500} $ls={-0.450} $color={faint} $lh="25px">System Status</Text>
                    <Text $size={22.500} $weight={600} $ls={-0.500} $color={green} $lh="35px">Online</Text>
                  </div>
                  <StatDot><Dot as="div" $s={15} /></StatDot>
                </Stat>
                <Stat>
                  <div>
                    <Text $size={17.500} $ls={-0.550} $color={faint} $lh="25px">Response Time</Text>
                    <Text $size={22.500} $weight={600} $ls={-0.700} $lh="35px">1.2s</Text>
                    <Text $size={15} $ls={-0.400} $color={green} $lh="20px">Within target</Text>
                  </div>
                </Stat>
                <Stat>
                  <div>
                    <Text $size={17.500} $ls={-0.680} $color={faint} $lh="25px">Today's Assessments</Text>
                    <Text $size={22.500} $weight={600} $ls={-0.700} $lh="35px">247</Text>
                    <Text $size={15} $ls={-0.560} $color={faint} $lh="20px">4.2% trigger rate</Text>
                  </div>
                </Stat>
                <Stat>
                  <div>
                    <Text $size={17.500} $ls={-0.450} $color={faint} $lh="25px">Block Rate</Text>
                    <Text $size={22.500} $weight={600} $ls={-1} $lh="35px">1.1%</Text>
                    <Text $size={15} $ls={-0.560} $color={red} $lh="20px">↓ 0.2% vs yesterday</Text>
                  </div>
                </Stat>
              </Stats>
            </Content>
          </SiteBody>
          <Dialog>
            <Text $size={20} $weight={500} $ls={-0.880}>Processing assessment...</Text>
            <CloseDialog><X size={18} strokeWidth={1.700} /></CloseDialog>
          </Dialog>
        </Site>
      </PreviewFrame>
    </PreviewPane>
  );
}

export default function App() {
  return (
    <>
      <Global />
      <Browser>
        <SideRail />
        <Main>
          <Tabs />
          <Edge>
            <Window>
              <AddressRow />
              <Bookmarks />
              <Workspace>
                <Chat />
                <Preview />
              </Workspace>
            </Window>
          </Edge>
        </Main>
      </Browser>
    </>
  );
}
